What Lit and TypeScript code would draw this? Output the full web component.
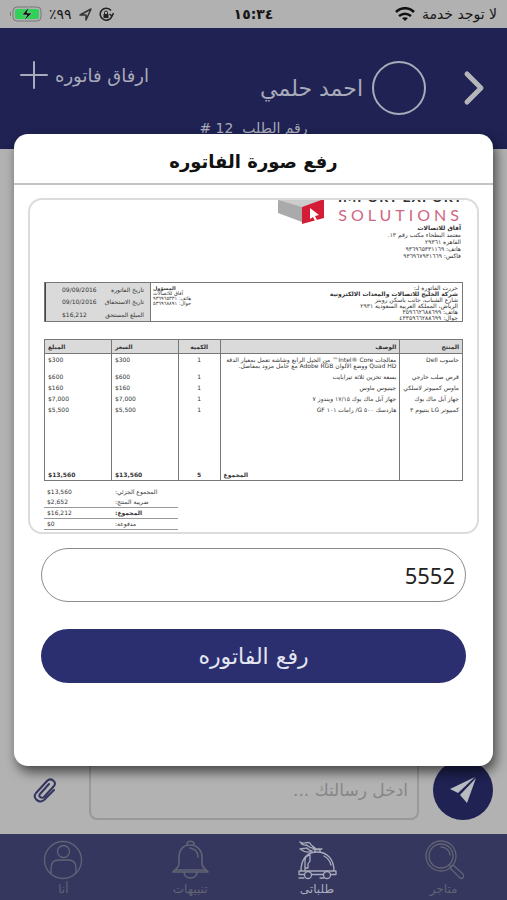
import { LitElement, html, css, svg } from "lit";
import { customElement, property } from "lit/decorators.js";

const ITEMS = [
  ["حاسوب Dell", html`معالجات Intel® Core™ من الجيل الرابع وشاشة تعمل بمعيار الدقة<br />Quad HD ووضع الألوان Adobe RGB مع حامل مزود بمفاصل.`, "1", "$300", "$300"],
  ["قرص صلب خارجي", "بسعة تخزين ثلاثة تيرابايت", "1", "$600", "$600"],
  ["ماوس كمبيوتر لاسلكي", "جينيوس ماوس", "1", "$160", "$160"],
  ["جهاز آبل ماك بوك", "جهاز آبل ماك بوك ١٧/١٥ ويندوز ٧", "1", "$7,000", "$7,000"],
  ["كمبيوتر LG بنتيوم ٣", "هاردسك ٥٠٠ G/ رامات ١٠١ GF", "1", "$5,500", "$5,500"],
];

const TABS = [
  {
    label: "متاجر",
    active: false,
    icon: svg`<circle cx="17" cy="16" r="15"/><circle cx="17" cy="16" r="12"/><path d="M17 7c5 0 9 4 9 8M26 28l3-3 10 9c2 2-1 6-3 4zM25 25l2 2"/>`,
  },
  {
    label: "طلباتى",
    active: true,
    icon: svg`<path d="M4 31c0-12 6-19 16-19s17 7 17 19M2 31h37v3.500h-5.500M26.500 34.500H15M7.500 34.500H2V31M18 12V9.500h5V12M16 9h9M8 30V20c0-2 2-4 5-5v6l-2 3v4H8M2 38h5M23 38h4M3 2c4 3 6-1 10 1 1 3 3 3 5 5-6 1-7-3-9-3S6 6 3 2M3 9c3-1 4 0 6-1 2 0 3 3 6 3-4 2-8 1-12-2M27 16c4 2 6 5 7 9"/><circle cx="11" cy="35" r="3.5"/><circle cx="30" cy="35" r="3.5"/>`,
  },
  {
    label: "تنبيهات",
    active: false,
    icon: svg`<path d="M20 5C12 5 9 11 9 17v7c0 4-4 5-6 8h35c-2-3-6-4-6-8v-7C32 11 28 5 20 5zM17 5c-1-5 8-5 7 0M14 32c0 8 13 8 13 0M5 30h31M20 8c6 1 8 5 8 9" stroke-width="1.6"/>`,
  },
  {
    label: "أنا",
    active: false,
    icon: svg`<circle cx="20" cy="20" r="18.5"/><circle cx="20.5" cy="11.5" r="6"/><path d="M8 33v-5c0-5 3-8 8-8h9c5 0 8 3 8 8v5"/>`,
  },
];

@customElement("status-bar")
export class StatusBar extends LitElement {
  static styles = css`
    :host {
      display: grid;
      grid-template-columns: 1fr auto 1fr;
      align-items: center;
      height: 28px;
      padding: 0 10px;
      background: #b1b1b1;
      color: #161616;
      font-size: 14px;
    }
    .side { display: flex; align-items: center; gap: 7px; }
    .end { justify-content: flex-end; }
    .time { font-weight: bold; }
    svg { display: block; }
  `;
  render() {
    return html`
      <div class="side">
        <span>لا توجد خدمة</span>
        <svg width="20" height="15" viewBox="0 0 20 15" fill="none" stroke="#111" stroke-width="2.6">
          <path d="M1 5c5-5 13-5 18 0M4 9c4-3 8-3 12 0" />
          <path d="M10 14l-3-3c2-1 4-1 6 0z" fill="#111" stroke="none" />
        </svg>
      </div>
      <span class="time">١٥:٣٤</span>
      <div class="side end">
        <svg width="15" height="15" viewBox="0 0 15 15" fill="none" stroke="#222" stroke-width="1.5">
          <path d="M12 3.500A6 6 0 1 0 13 9M14.500 6l-1.500 3-2.500-2" />
          <path d="M4.500 7h5v4h-5z" fill="#222" stroke="none" /><path d="M5.500 7V5.500a1.500 1.500 0 0 1 3 0V7" stroke-width="1" />
        </svg>
        <svg width="13" height="13" viewBox="0 0 13 13" fill="none" stroke="#333" stroke-width="1.5" stroke-linejoin="round">
          <path d="M1 7l11-6-5 11V7z" />
        </svg>
        <span>٩٩٪</span>
        <svg width="32" height="16" viewBox="0 0 32 16">
          <rect x="3" y="1" width="28" height="14" rx="4" fill="none" stroke="#777" />
          <rect x="5" y="3" width="24" height="10" rx="2" fill="#2fd158" />
          <path d="M0 6v4h1V6z" fill="#777" />
          <path d="M19 1l-7 8h5l-3 6 8-8h-5z" fill="#111" stroke="#b1d8b8" stroke-width=".5" />
        </svg>
      </div>
    `;
  }
}

@customElement("invoice-sheet")
export class InvoiceSheet extends LitElement {
  static styles = css`
    :host {
      display: block;
      overflow: hidden;
      padding: 0 14px 2px;
      border: 2px solid #dcdcdc;
      border-radius: 14px;
      background: #fff;
      color: #333;
      font-size: 6px;
      line-height: 7px;
    }
    .brand { display: flex; gap: 12px; margin-top: -11px; direction: rtl; }
    .brand svg { display: block; margin-top: 11px; }
    .wordmark { direction: ltr; font-family: Lato, sans-serif; text-align: right; }
    .top { font-weight: bold; font-size: 14px; line-height: 16px; letter-spacing: 1px; color: #333; }
    .bottom { font-size: 16px; line-height: 19px; letter-spacing: 4px; color: #cf6683; }
    .sender { padding: 0 2px; }
    .strong { font-weight: bold; }
    .parties { display: flex; height: 38px; margin-top: 23px; border: 1px solid #777; }
    .client { flex: 1; padding: 2px 4px; line-height: 6px; }
    .owner { width: 50px; padding: 3px 2px; line-height: 5px; font-size: 5px; text-align: left; }
    .dates { display: grid; box-sizing: border-box; grid-template-columns: 40px 36px; column-gap: 6px; align-content: space-around; width: 106px; padding-right: 6px; background: #dadada; border-right: 1px solid #777; border-left: 1px solid #444; white-space: nowrap; }
    .value { text-align: left; }
    table { width: 100%; margin-top: 17px; border-collapse: collapse; table-layout: fixed; }
    th, td { padding: 2px 3px; border-right: 1px solid #777; border-left: 1px solid #777; text-align: right; vertical-align: top; font-size: 6px; white-space: nowrap; }
    td { height: 7px; }
    table, thead { border: 1px solid #777; }
    th { box-sizing: border-box; height: 14px; background: #dadada; vertical-align: middle; }
    th.value, td.value { text-align: left; }
    .c-product { width: 15%; }
    .c-desc { width: 43%; }
    .c-count { width: 10%; }
    .c-money { width: 16%; }
    .first td { height: 12px; padding-top: 3px; line-height: 6px; }
    .last td { height: 61px; }
    .total td { font-weight: bold; text-align: left; }
    th.count, tr td.count { text-align: center; }
    .sums { display: flex; flex-direction: column; width: 32%; margin: 6px auto 0 0; }
    .sum { display: grid; grid-template-columns: 1fr 1fr; padding: 1px 3px 2px; direction: ltr; }
    .sum-label { direction: rtl; text-align: left; padding-left: 4px; }
    .ruled { border-bottom: 1px solid #999; }
  `;
  render() {
    return html`
      <div class="brand">
        <div class="wordmark">
          <div class="top">IMPORT EXPORT</div>
          <div class="bottom">SOLUTIONS</div>
        </div>
        <svg width="48" height="24" viewBox="0 0 48 24">
          <path d="M0 0h24v22L0 13z" fill="#aaa" />
          <path d="M0 0h46L24 7z" fill="#ccc" />
          <path d="M24 7l22-8v19l-22 6z" fill="#d41c36" />
          <path d="M32 8l9 7-4 1 2 4-2 1-2-4-3 2z" fill="#fff" />
        </svg>
      </div>
      <div class="sender">
        <div class="strong">آفاق للاتصالات</div>
        <div>معتمد البطحاء مكتب رقم ١٣.</div>
        <div>القاهرة ٢٩٣٦١</div>
        <div>هاتف: ٩٣٦٩٦٥٣٣١١٦٩</div>
        <div>فاكس: ٩٣٦٩٦٧٩٣١٦٦٩</div>
      </div>
      <div class="parties">
        <div class="client">
          <div>حررت الفاتورة لـ:</div>
          <div class="strong">شركة الخليج للاتصالات والمعدات الالكترونية</div>
          <div>شارع الشباب، جانب باسكن روبنز</div>
          <div>الرياض، المملكة العربية السعودية ٢٩٣١</div>
          <div>هاتف: ٣٥٩٦٦٢٦٨٨٦٩٩</div>
          <div>جوال: ٤٣٣٥٩٦٦٢٨٨٦٩٩</div>
        </div>
        <div class="owner">
          <div class="strong">المسؤول</div>
          <div>آفاق للاتصالات</div>
          <div>هاتف: ٩٣٦٩٦٥٣٣١</div>
          <div>جوال: ٥٣٦٩٦٨٨٩١</div>
        </div>
        <div class="dates">
          <span>تاريخ الفاتورة</span><span class="value">09/09/2016</span>
          <span>تاريخ الاستحقاق</span><span class="value">09/10/2016</span>
          <span>المبلغ المستحق</span><span class="value">$16,212</span>
        </div>
      </div>
      <table>
        <thead>
          <tr>
            <th class="c-product">المنتج</th>
            <th class="c-desc">الوصف</th>
            <th class="c-count count">الكمية</th>
            <th class="c-money value">السعر</th>
            <th class="c-money value">المبلغ</th>
          </tr>
        </thead>
        <tbody>
          ${ITEMS.map(
            (r, i) => html`<tr class=${i === 0 ? "first" : i === ITEMS.length - 1 ? "last" : ""}>
              <td>${r[0]}</td>
              <td>${r[1]}</td>
              <td class="count">${r[2]}</td>
              <td class="value">${r[3]}</td>
              <td class="value">${r[4]}</td>
            </tr>`
          )}
          <tr class="total">
            <td></td>
            <td>المجموع</td>
            <td class="count">5</td>
            <td>$13,560</td>
            <td>$13,560</td>
          </tr>
        </tbody>
      </table>
      <div class="sums">
        <div class="sum"><span>$13,560</span><span class="sum-label">المجموع الجزئي:</span></div>
        <div class="sum ruled"><span>$2,652</span><span class="sum-label">ضريبة المنتج:</span></div>
        <div class="sum ruled"><span>$16,212</span><span class="sum-label strong">المجموع:</span></div>
        <div class="sum ruled"><span>$0</span><span class="sum-label">مدفوعة:</span></div>
      </div>
    `;
  }
}

@customElement("tab-bar")
export class TabBar extends LitElement {
  static styles = css`
    :host { display: grid; grid-template-columns: repeat(4, 1fr); height: 66px; background: #35375f; }
    .tab { display: flex; flex-direction: column; align-items: center; padding-top: 6px; color: #626475; font-size: 12px; line-height: 18px; text-decoration: none; }
    .active { color: #aaabbb; }
    svg { display: block; width: 40px; height: 40px; fill: none; stroke: currentColor; stroke-width: 1.3; stroke-linecap: round; stroke-linejoin: round; }
  `;
  render() {
    return TABS.map(
      (t) => html`<a class="tab ${t.active ? "active" : ""}" href="#">
        <svg viewBox="0 0 40 40">${t.icon}</svg>
        <span>${t.label}</span>
      </a>`
    );
  }
}

@customElement("app-root")
export class AppRoot extends LitElement {
  @property() amount = "5552";

  static styles = css`
    :host {
      display: flex;
      flex-direction: column;
      position: relative;
      min-height: 100vh;
      direction: rtl;
      background: #b2b2b2;
      font-family: "DejaVu Sans", sans-serif;
    }
    button { border: 0; padding: 0; background: none; color: inherit; font: inherit; cursor: pointer; }
    input { box-sizing: border-box; font: inherit; outline: 0; }
    svg { display: block; }
    header { height: 121px; background: #1f2252; color: #a9abba; }
    .bar { display: flex; align-items: center; padding: 33px 22px 0 20px; }
    .back { margin-inline-end: 37px; }
    .avatar { box-sizing: border-box; width: 54px; height: 54px; border: 2px solid #a9abba; border-radius: 50%; }
    .name { margin-inline-start: 9px; font-size: 22px; }
    .attach { display: flex; align-items: center; align-self: flex-start; gap: 7px; margin-inline-start: auto; font-size: 18px; }
    .order { font-size: 14px; line-height: 26px; text-align: center; }
    main { flex: 1; }
    .composer { display: flex; align-items: center; padding: 0 14px 14px; }
    .send { display: grid; place-items: center; width: 60px; height: 60px; border-radius: 50%; background: #1f2252; color: #b8bcc0; }
    .message { flex: 1; min-width: 0; height: 60px; margin: 0 14px 0 31px; padding: 0 9px; border: 2px solid #999; border-radius: 8px; background: none; font-size: 17px; }
    .message::placeholder { color: #868686; opacity: 1; }
    .clip { margin-inline-end: 18px; }
    .overlay { position: absolute; inset: 0; padding: 134px 14px 0; }
    .dialog { padding-bottom: 83px; border-radius: 14px; background: #fff; box-shadow: 3px 6px 12px rgba(0, 0, 0, 0.6); }
    h2 { margin: 0; padding-top: 6px; border-bottom: 2px solid #c4c4c4; font-size: 18px; line-height: 43px; text-align: center; color: #111; }
    .form { display: flex; flex-direction: column; padding: 13px 14px 0; }
    .amount { height: 54px; margin: 14px 13px 27px; padding: 0 10px; border: 1px solid #8b8b8b; border-radius: 27px; font-family: "Noto Sans", sans-serif; font-size: 22px; color: #222; }
    .upload { height: 54px; margin: 0 13px; border-radius: 27px; background: #2b2f70; color: #e4e5f0; font-size: 22px; }
  `;

  render() {
    return html`
      <status-bar></status-bar>
      <header>
        <div class="bar">
          <button class="back" aria-label="رجوع">
            <svg width="22" height="36" viewBox="0 0 22 36" fill="none" stroke="#b4b6ba" stroke-width="5" stroke-linecap="round" stroke-linejoin="round">
              <path d="M4 4l14 14L4 32" />
            </svg>
          </button>
          <div class="avatar"></div>
          <span class="name">احمد حلمي</span>
          <button class="attach">
            ارفاق فاتوره
            <svg width="28" height="28" viewBox="0 0 28 28" stroke="currentColor" stroke-width="2" stroke-linecap="round"><path d="M14 1v26M1 14h26" /></svg>
          </button>
        </div>
        <div class="order">رقم الطلب &nbsp;12 #</div>
      </header>
      <main></main>
      <div class="composer">
        <button class="send" aria-label="إرسال">
          <svg width="28" height="28" viewBox="0 0 28 28" fill="currentColor"><path d="M1 13L26 1 9 17zM11 19L27 2 18 27z" /></svg>
        </button>
        <input class="message" aria-label="الرسالة" placeholder="ادخل رسالتك ..." />
        <button class="clip" aria-label="إرفاق ملف">
          <svg width="26" height="28" viewBox="0 0 26 28" fill="none" stroke="#33345f" stroke-width="2" stroke-linecap="round" stroke-linejoin="round">
            <path d="M22 14L12 24c-5 4-12-2-8-7L15 5c4-4 10 1 7 5L12 21c-3 2-6-1-4-3l9-10" />
          </svg>
        </button>
      </div>
      <tab-bar></tab-bar>
      <div class="overlay">
        <section class="dialog" role="dialog" aria-labelledby="title">
          <h2 id="title">رفع صورة الفاتوره</h2>
          <div class="form">
            <invoice-sheet></invoice-sheet>
            <input class="amount" aria-label="مبلغ الفاتورة" .value=${this.amount} />
            <button class="upload">رفع الفاتوره</button>
          </div>
        </section>
      </div>
    `;
  }
}
